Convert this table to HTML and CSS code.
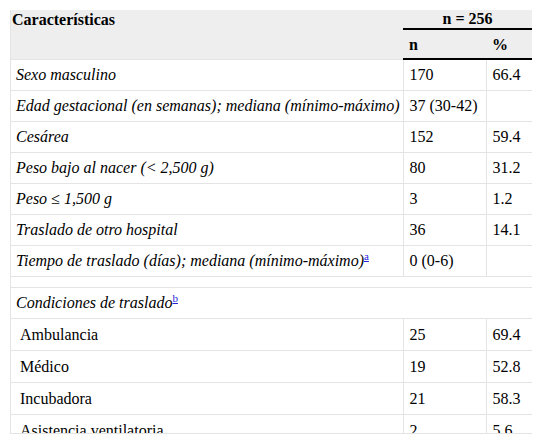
FILE: index.html
```html
<!DOCTYPE html>
<html lang="es">
<head>
<meta charset="utf-8">
<link rel="stylesheet" href="styles.css">
</head>
<body>
<div class="wrap">
<table class="tbl">
<colgroup><col class="c1"><col class="c2"><col class="c3"></colgroup>
<thead>
<tr class="h1">
<th rowspan="2" class="hcar">Características</th>
<th colspan="2" class="hgrp">n = 256</th>
</tr>
<tr class="h2">
<th class="hsub">n</th>
<th class="hsub">%</th>
</tr>
</thead>
<tbody>
<tr><td class="lbl">Sexo masculino</td><td>170</td><td>66.4</td></tr>
<tr><td class="lbl">Edad gestacional (en semanas); mediana (mínimo-máximo)</td><td>37 (30-42)</td><td></td></tr>
<tr><td class="lbl">Cesárea</td><td>152</td><td>59.4</td></tr>
<tr><td class="lbl">Peso bajo al nacer (&lt; 2,500 g)</td><td>80</td><td>31.2</td></tr>
<tr><td class="lbl">Peso ≤ 1,500 g</td><td>3</td><td>1.2</td></tr>
<tr><td class="lbl">Traslado de otro hospital</td><td>36</td><td>14.1</td></tr>
<tr><td class="lbl">Tiempo de traslado (días); mediana (mínimo-máximo)<sup><a href="#a" class="fn">a</a></sup></td><td>0 (0-6)</td><td></td></tr>
<tr class="empty"><td colspan="3"></td></tr>
<tr><td colspan="3" class="lbl">Condiciones de traslado<sup><a href="#b" class="fn">b</a></sup></td></tr>
<tr class="subrow"><td class="sub">Ambulancia</td><td>25</td><td>69.4</td></tr>
<tr class="subrow"><td class="sub">Médico</td><td>19</td><td>52.8</td></tr>
<tr class="subrow"><td class="sub">Incubadora</td><td>21</td><td>58.3</td></tr>
<tr class="subrow"><td class="sub">Asistencia ventilatoria</td><td>2</td><td>5.6</td></tr>
</tbody>
</table>
</div>
</body>
</html>
```
FILE: styles.css
```css
html, body {
  margin: 0;
  padding: 0;
  background: #fff;
}
body, .tbl, .tbl th, .tbl td, .tbl a {
  font-family: "Liberation Serif", "Times New Roman", Times, serif;
}
body {
  font-size: 16px;
  color: #000;
}
.wrap {
  margin: 10px 0 0 10px;
  width: 522px;
  height: 424px;
  overflow: hidden;
  border-bottom: 1px solid #e4e4e4;
  border-left: 1px solid #e4e4e4;
  box-sizing: border-box;
}
.tbl {
  width: 521px;
  border-collapse: collapse;
  table-layout: fixed;
  font-size: 16px;
}
.c1 { width: 392px; }
.c2 { width: 83px; }
.c3 { width: 46px; }
thead tr { background: #eeeeee; }
th {
  font-weight: bold;
  text-align: left;
  line-height: 17px;
}
.hcar {
  vertical-align: top;
  padding: 1px 1px;
}
.hgrp {
  text-align: center;
  padding: 0 6px 1px;
  border-bottom: 2px solid #000;
  height: 17px;
}
.hsub {
  padding: 6px 6px 5px;
}
.h2 th { border-bottom: 2px solid #000; }
td {
  padding: 5px 6px;
  line-height: 20px;
  border: 1px solid #e4e4e4;
  vertical-align: top;
  white-space: nowrap;
}
tbody tr td:first-child { border-left: none; }
.lbl { font-style: italic; padding-left: 5px; padding-right: 2px; }
.sub { padding-left: 9px; }
.subrow td { padding-top: 6px; }
.empty td { padding: 6px 0 4px; line-height: 0; height: 0; }
.fn {
  color: #2222dd;
  text-decoration: underline;
  font-size: 11px;
  font-style: normal;
}
sup { line-height: 0; vertical-align: 6px; }
```
